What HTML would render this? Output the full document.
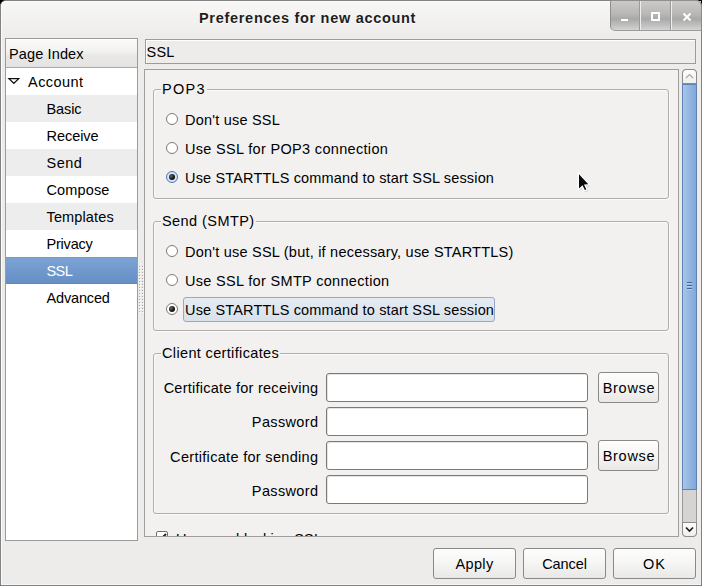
<!DOCTYPE html>
<html><head><meta charset="utf-8">
<style>
*{margin:0;padding:0;box-sizing:border-box}
html,body{width:702px;height:586px;overflow:hidden;background:#000}
body{position:relative;font-family:"Liberation Sans",sans-serif;font-size:14.5px;letter-spacing:0.13px;color:#000}
.a{position:absolute}
.t{position:absolute;white-space:nowrap;line-height:16px}
#win{left:0;top:0;width:702px;height:586px;border:1px solid #828282;border-radius:6px 6px 0 0;background:#edeceb}
#win2{left:1px;top:1px;width:700px;height:584px;border-left:1px solid #fbfbfb;border-top:1px solid #fbfbfb;border-bottom:1px solid #f6f6f6;border-radius:5px 0 0 0}
#title{left:2px;top:2px;width:698px;height:35px;background:linear-gradient(#f7f7f6,#edeceb)}
#ctl{left:610px;top:0;width:92px;height:31px;border-top:1px solid #8f8f8f;border-right:1px solid #8a8a8a;border-top-right-radius:6px;background:linear-gradient(#cbcac8 0%,#b8b7b6 45%,#a9a9a9 62%,#c2c2c1 85%,#d3d3d2 100%);border-bottom-left-radius:5px;border-bottom:1px solid #9c9c9c;border-left:1px solid #8e8e8e}
.sep{top:0;width:2px;height:29px;background:linear-gradient(90deg,#9a9a9a 50%,#eeeeee 50%)}
#tree{left:5px;top:38px;width:133px;height:503px;border:1px solid #9c9b99;background:#fff}
#hdr{left:0;top:0;width:131px;height:29px;background:linear-gradient(#fafafa 0%,#f3f3f2 40%,#e9e8e6 60%,#e4e3e1 100%);border-bottom:1px solid #a9a8a6;box-shadow:inset 0 1px 0 #fff}
.row{left:0;width:131px;height:27px}
.alt{background:#ededed}
.sel{background:linear-gradient(#7da2d5,#658fc5);color:#fff;border-top:1px solid #7399cf;border-bottom:1px solid #5f89c1}
#sslbox{left:145px;top:39px;width:551px;height:25px;border:1px solid #9c9b99;background:#edeceb;box-shadow:inset 1px 1px 0 #fff}
#vp{left:144px;top:69px;width:535px;height:468px;border:1px solid #a09f9d;background:#f2f1f0;overflow:hidden}
.frame{border:1px solid #aeadab;border-radius:3px;box-shadow:1px 1px 0 #fbfbfb, inset 1px 1px 0 #fbfbfb}
.legend{background:#f2f1f0;padding:0 1px 0 1px}
.radio{width:12px;height:12px;border-radius:50%;border:1px solid #7a7a7a;background:#fff}
.dot{left:2px;top:2px;width:6px;height:6px;border-radius:50%;background:radial-gradient(circle at 35% 35%,#666 0,#111 60%)}
.entry{border:1px solid #7b7a78;border-radius:3px;background:#fff;box-shadow:inset 1px 1px 0 #e4e4e4}
.btn{border:1px solid #8a8987;border-radius:3px;background:linear-gradient(#fdfdfd 0%,#f6f6f5 45%,#e9e8e7 100%);text-align:center}
</style></head><body>
<div id="win" class="a"></div>
<div id="win2" class="a"></div>
<div id="title" class="a"></div>
<div class="t" style="left:199px;top:10px;font-weight:bold;font-size:14.5px;letter-spacing:0.7px;color:#1e1e1e;text-shadow:0 1px 0 #fff">Preferences for new account</div>
<div id="ctl" class="a">
  <div class="a sep" style="left:28px"></div>
  <div class="a sep" style="left:59px"></div>
  <div class="a" style="left:10px;top:18px;width:7px;height:2px;background:#fff"></div>
  <div class="a" style="left:40px;top:11px;width:9px;height:9px;border:2px solid #fff"></div>
  <svg class="a" style="left:71px;top:11px" width="10" height="10" viewBox="0 0 10 10"><path d="M1.5 1.5L8.5 8.5M8.5 1.5L1.5 8.5" stroke="#fff" stroke-width="2"/></svg>
</div>

<div id="tree" class="a">
  <div id="hdr" class="a"><div class="t" style="left:3px;top:7px">Page Index</div></div>
  <div class="a row" style="top:29px"><svg class="a" style="left:1px;top:9px" width="13" height="8"><path d="M1.9 1.6H11.8L6.85 6.3Z" fill="none" stroke="#111" stroke-width="1.2"/></svg><div class="t" style="left:22px;top:6px;letter-spacing:0.46px">Account</div></div>
  <div class="a row alt" style="top:56px"><div class="t" style="left:40.5px;top:6px;letter-spacing:-0.12px">Basic</div></div>
  <div class="a row" style="top:83px"><div class="t" style="left:40.5px;top:6px;letter-spacing:-0.04px">Receive</div></div>
  <div class="a row alt" style="top:110px"><div class="t" style="left:40.5px;top:6px;letter-spacing:0.46px">Send</div></div>
  <div class="a row" style="top:137px"><div class="t" style="left:40.5px;top:6px">Compose</div></div>
  <div class="a row alt" style="top:164px"><div class="t" style="left:40.5px;top:6px">Templates</div></div>
  <div class="a row" style="top:191px"><div class="t" style="left:40.5px;top:6px;letter-spacing:-0.2px">Privacy</div></div>
  <div class="a row sel" style="top:218px"><div class="t" style="left:40.5px;top:5px;letter-spacing:-0.6px">SSL</div></div>
  <div class="a row" style="top:245px"><div class="t" style="left:40.5px;top:6px;letter-spacing:-0.16px">Advanced</div></div>
</div>

<div id="sslbox" class="a"><div class="t" style="left:0.6px;top:4px">SSL</div></div>

<div id="vp" class="a">
  <!-- POP3 frame -->
  <div class="a frame" style="left:8px;top:19px;width:516px;height:110px"></div>
  <div class="t legend" style="left:16px;top:11px;letter-spacing:1.33px">POP3</div>
  <div class="a radio" style="left:21px;top:43px"></div><div class="t" style="left:40px;top:42px;letter-spacing:0.21px">Don't use SSL</div>
  <div class="a radio" style="left:21px;top:72px"></div><div class="t" style="left:40px;top:71px;letter-spacing:0.32px">Use SSL for POP3 connection</div>
  <div class="a radio" style="left:21px;top:101px;border-color:#4a76b0;background:#d6e5fa"><div class="a dot"></div></div><div class="t" style="left:40px;top:100px;letter-spacing:0.155px">Use STARTTLS command to start SSL session</div>

  <!-- SMTP frame -->
  <div class="a frame" style="left:8px;top:151px;width:516px;height:110px"></div>
  <div class="t legend" style="left:16px;top:143px;letter-spacing:0.43px">Send (SMTP)</div>
  <div class="a radio" style="left:21px;top:175px"></div><div class="t" style="left:40px;top:174px;letter-spacing:0.22px">Don't use SSL (but, if necessary, use STARTTLS)</div>
  <div class="a radio" style="left:21px;top:204px"></div><div class="t" style="left:40px;top:203px;letter-spacing:0.32px">Use SSL for SMTP connection</div>
  <div class="a radio" style="left:21px;top:233px"><div class="a dot"></div></div>
  <div class="a" style="left:38px;top:227px;width:312px;height:25px;border:1px solid #94a9c6;background:linear-gradient(#e6ebf2,#d9e1eb);border-radius:3px"></div>
  <div class="t" style="left:40px;top:232px;letter-spacing:0.155px">Use STARTTLS command to start SSL session</div>

  <!-- Client certs -->
  <div class="a frame" style="left:8px;top:283px;width:516px;height:161px"></div>
  <div class="t legend" style="left:16px;top:275px;letter-spacing:0.35px">Client certificates</div>
  <div class="t" style="left:0;top:310px;width:173.3px;text-align:right;letter-spacing:0.255px">Certificate for receiving</div>
  <div class="a entry" style="left:181px;top:303px;width:262px;height:29px"></div>
  <div class="a btn" style="left:453px;top:302px;width:61px;height:31px"><div class="t" style="left:1px;right:0;top:7px;letter-spacing:0.73px">Browse</div></div>
  <div class="t" style="left:0;top:344px;width:173.4px;text-align:right;letter-spacing:0.36px">Password</div>
  <div class="a entry" style="left:181px;top:337px;width:262px;height:29px"></div>
  <div class="t" style="left:0;top:378.5px;width:173.3px;text-align:right;letter-spacing:0.31px">Certificate for sending</div>
  <div class="a entry" style="left:181px;top:371px;width:262px;height:29px"></div>
  <div class="a btn" style="left:453px;top:370px;width:61px;height:31px"><div class="t" style="left:1px;right:0;top:7px;letter-spacing:0.73px">Browse</div></div>
  <div class="t" style="left:0;top:413px;width:173.4px;text-align:right;letter-spacing:0.36px">Password</div>
  <div class="a entry" style="left:181px;top:405px;width:262px;height:29px"></div>

  <div class="a" style="left:11px;top:461px;width:12px;height:12px;border:1px solid #6f6f6f;border-radius:2px;background:#fff"></div>
  <svg class="a" style="left:13px;top:462px" width="10" height="10"><path d="M2 8L8 2" stroke="#222" stroke-width="2"/></svg>
  <div class="t" style="left:31px;top:461px">Use non-blocking SSL</div>
</div>

<!-- scrollbar -->
<div class="a" style="left:682px;top:69px;width:15px;height:468px;background:#d5d4d2;border:1px solid #9a9997;border-radius:4px"></div>
<div class="a" style="left:682px;top:69px;width:15px;height:15px;background:linear-gradient(#fdfdfd,#efefee);border:1px solid #8c8b89;border-radius:4px 4px 0 0"></div>
<svg class="a" style="left:685px;top:73px" width="9" height="6"><path d="M1 5L4.5 1.5L8 5" fill="none" stroke="#a8a8a8" stroke-width="1.2"/></svg>
<div class="a" style="left:682px;top:84px;width:15px;height:406px;background:linear-gradient(90deg,#a9c5ea 0%,#94b6e2 50%,#82a7d8 100%);border:1px solid #5d82b3"></div>
<div class="a" style="left:687px;top:282px;width:5px;height:1px;background:#46658e;box-shadow:0 1px 0 #b4ccec"></div>
<div class="a" style="left:687px;top:285px;width:5px;height:1px;background:#46658e;box-shadow:0 1px 0 #b4ccec"></div>
<div class="a" style="left:687px;top:288px;width:5px;height:1px;background:#46658e;box-shadow:0 1px 0 #b4ccec"></div>
<div class="a" style="left:682px;top:522px;width:15px;height:15px;background:linear-gradient(#fdfdfd,#efefee);border:1px solid #8c8b89;border-radius:0 0 4px 4px"></div>
<svg class="a" style="left:685px;top:526px" width="9" height="7"><path d="M1 1.5L4.5 5L8 1.5" fill="none" stroke="#1a1a1a" stroke-width="1.6"/></svg>

<!-- pane handle dots -->
<svg class="a" style="left:138px;top:265px" width="6" height="48"><defs><pattern id="pd" width="3" height="3" patternUnits="userSpaceOnUse"><rect x="1" y="1" width="1" height="1" fill="#a9a8a6"/><rect x="2" y="2" width="1" height="1" fill="#ffffff"/></pattern></defs><rect width="6" height="48" fill="url(#pd)"/></svg>

<div class="a btn" style="left:433px;top:548px;width:83px;height:31px"><div class="t" style="left:0;right:0;top:7px;letter-spacing:0.38px">Apply</div></div>
<div class="a btn" style="left:523px;top:548px;width:83px;height:31px"><div class="t" style="left:0;right:0;top:7px;letter-spacing:-0.07px">Cancel</div></div>
<div class="a btn" style="left:613px;top:548px;width:83px;height:31px"><div class="t" style="left:0;right:0;top:7px;letter-spacing:1.13px">OK</div></div>
<!-- mouse cursor -->
<svg class="a" style="left:570px;top:165px" width="30" height="30" viewBox="570 165 30 30"><path d="M579 174.3L579 188.6L582.5 185.3L584.9 190L586.3 189.4L584 184.6L588.3 184.3Z" fill="#bbb" stroke="#bbb" stroke-width="2.4" stroke-linejoin="round" transform="translate(0.8,0.9)" opacity="0.5"/><path d="M579 174.3L579 188.6L582.5 185.3L584.9 190L586.3 189.4L584 184.6L588.3 184.3Z" fill="#0a0a0a" stroke="#fff" stroke-width="2.4" stroke-linejoin="miter" stroke-miterlimit="3" paint-order="stroke"/></svg>
</body></html>
